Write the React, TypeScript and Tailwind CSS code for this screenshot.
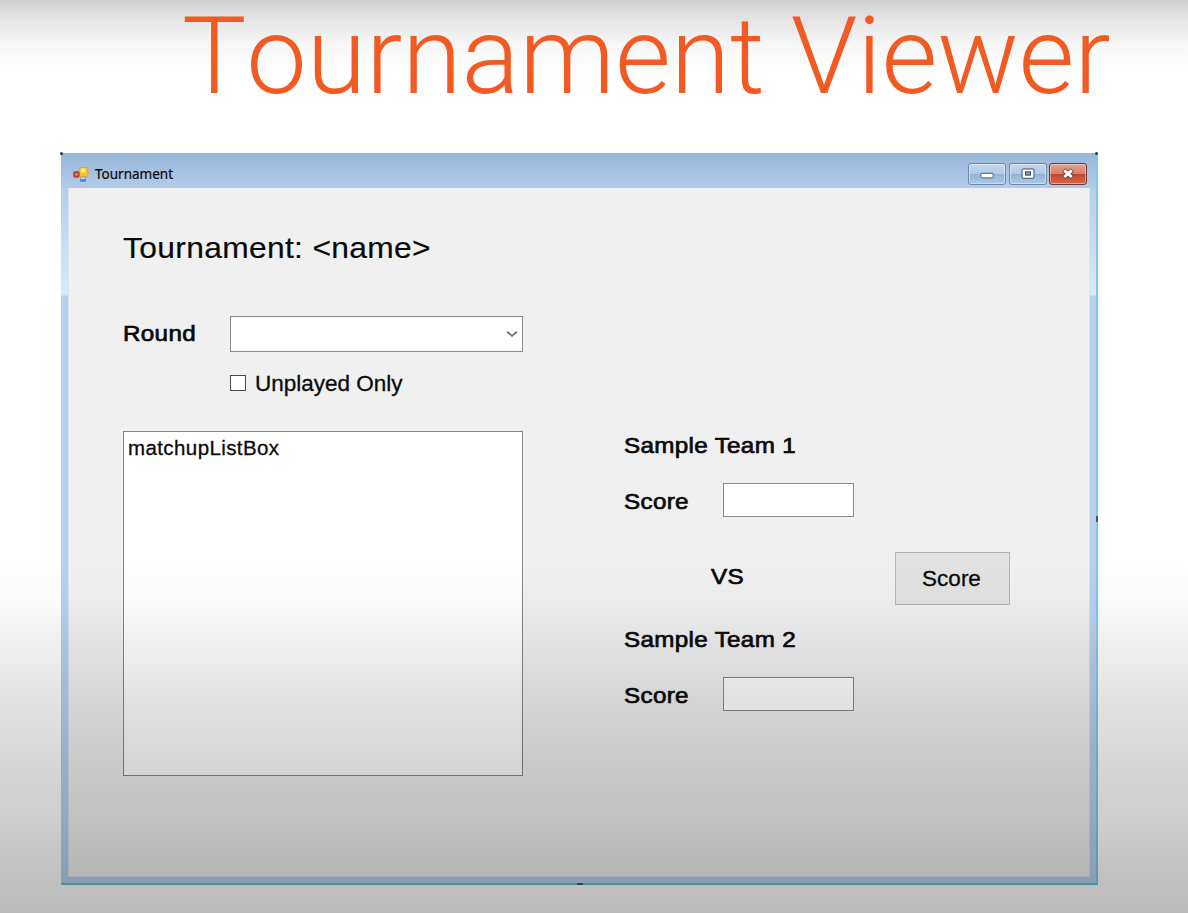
import type { ReactNode } from "react";

function BoldLabel({ children, className = "" }: { children: ReactNode; className?: string }) {
  return (
    <span
      className={`block origin-left scale-x-110 whitespace-nowrap text-[22px] leading-[30px] tracking-[0.3px] [-webkit-text-stroke:0.7px_#0a0a0a] ${className}`}
    >
      {children}
    </span>
  );
}

function FormIcon() {
  return (
    <svg width="17" height="17" viewBox="0 0 17 17">
      <rect x="6.5" y="1.5" width="8.5" height="9" rx="1.5" fill="#f3c233" stroke="#d3a544" />
      <rect x="8" y="2.5" width="4.5" height="4" rx="1" fill="#fde58a" />
      <rect x="0.8" y="5.8" width="5.2" height="5.4" rx="0.8" fill="#d8432f" stroke="#a9453b" />
      <rect x="2.6" y="7.4" width="2" height="2" fill="#f39a86" />
      <rect x="7" y="11.5" width="6" height="4.2" rx="0.6" fill="#4f83dc" />
      <rect x="7.6" y="11.5" width="4.6" height="1.6" fill="#b9d1f6" />
    </svg>
  );
}

function CaptionButton({ kind }: { kind: "min" | "max" | "close" }) {
  const tone =
    kind === "close"
      ? "border-[#6f3840] bg-[linear-gradient(#e6a595_0%,#db7a66_48%,#c8432b_52%,#d9694a_100%)]"
      : "border-[#6f87a8] bg-[linear-gradient(#c3d7ee_0%,#b1cae6_48%,#94b3d8_52%,#abc8e8_100%)]";
  return (
    <div
      className={`flex h-[22px] w-[38px] items-center justify-center rounded-[3px] border shadow-[inset_0_0_0_1px_rgba(255,255,255,0.4)] ${tone}`}
    >
      <svg width="16" height="14" viewBox="0 0 16 14">
        {kind === "min" && (
          <rect x="1.8" y="6.3" width="12.4" height="4.6" rx="1.2" fill="#fff" stroke="#68778c" strokeWidth="1.2" />
        )}
        {kind === "max" && (
          <>
            <rect x="2" y="1.8" width="12" height="9.6" rx="1.8" fill="#fff" stroke="#5c6b80" strokeWidth="1.2" />
            <rect x="5.6" y="4.9" width="4.8" height="3.2" fill="#8ea6c6" stroke="#4a5870" strokeWidth="1.2" />
          </>
        )}
        {kind === "close" && (
          <>
            <path d="M3.6 3l8.8 7.4M12.4 3l-8.8 7.4" stroke="#6d4550" strokeWidth="4.8" />
            <path d="M4.2 3.4l7.6 6.6M11.8 3.4l-7.6 6.6" stroke="#fff" strokeWidth="2.8" />
          </>
        )}
      </svg>
    </div>
  );
}

function ScoreRow() {
  return (
    <div className="flex h-[34px] items-center justify-between">
      <BoldLabel className="mt-[4px]">Score</BoldLabel>
      <div className="h-[34px] w-[131px] border-[1.5px] border-[#8b8b8b] bg-white" />
    </div>
  );
}

export default function App() {
  return (
    <main className="relative h-[913px] w-[1188px] overflow-hidden bg-white font-['Liberation_Sans',Arial,sans-serif] text-[#0a0a0a]">
      <h1 className="relative z-10 h-[153px] whitespace-nowrap pl-[182px] font-['Roboto',sans-serif] text-[108px] font-light leading-[112px] tracking-[-0.12px] text-[#f25a24] [font-kerning:none]">
        Tournament Viewer
      </h1>

      <section className="relative ml-[61px] flex h-[732px] w-[1037px] flex-col border-r-2 border-b-2 border-r-[#7ccaec] border-b-[#5cc0d8] bg-[#b5cee9]">
        <header className="flex h-[35px] shrink-0 items-center bg-[linear-gradient(#98b6d8,#b2cbe8)] pl-[12px] pr-[9px] pt-[7px]">
          <FormIcon />
          <span className="ml-[5px] font-['Noto_Sans',sans-serif] text-[13.5px] leading-[20px] [-webkit-text-stroke:0.2px_#0a0a0a]">
            Tournament
          </span>
          <div className="ml-auto flex gap-[2.5px]">
            <CaptionButton kind="min" />
            <CaptionButton kind="max" />
            <CaptionButton kind="close" />
          </div>
        </header>

        <div className="flex grow bg-[linear-gradient(#b5cee9_0px,#dbe9f8_107px,#b7d0ec_108px,#b7d0ec_100%)] pb-[6px] pl-[7px] pr-[6px]">
          <div className="grow border border-t-0 border-[#d9e5f0] bg-[#f0f0f0] pl-[54px] pt-[40px]">
            <h2 className="origin-left scale-x-[1.06] whitespace-nowrap text-[30px] leading-[40px] tracking-[0.3px] [-webkit-text-stroke:0.2px_#0a0a0a]">
              Tournament: &lt;name&gt;
            </h2>

            <div className="mt-[48px] flex h-[36px] w-[400px] items-center justify-between">
              <BoldLabel>Round</BoldLabel>
              <div className="flex h-[36px] w-[293px] items-center justify-end border-[1.5px] border-[#8b8b8b] bg-white pr-[4px]">
                <svg width="12" height="8" viewBox="0 0 12 8" fill="none">
                  <path d="M1.2 1.6L6 6l4.8-4.4" stroke="#5e5e5e" strokeWidth="1.5" />
                </svg>
              </div>
            </div>

            <div className="mt-[16px] flex h-[30px] items-center pl-[107px]">
              <span className="h-[16px] w-[16px] border-[1.5px] border-[#4a4a4a] bg-white" />
              <span className="ml-[9px] mt-px whitespace-nowrap text-[22.5px] leading-[30px] [-webkit-text-stroke:0.3px_#0a0a0a]">
                Unplayed Only
              </span>
            </div>

            <div className="mt-[33px] flex">
              <div className="h-[345px] w-[400px] border-[1.5px] border-[#85878f] bg-white pl-[4px] pt-[2px]">
                <span className="block text-[20.5px] leading-[28px] tracking-[0.4px] [-webkit-text-stroke:0.3px_#0a0a0a]">
                  matchupListBox
                </span>
              </div>

              <div className="ml-[101px] flex w-[230px] flex-col">
                <BoldLabel>Sample Team 1</BoldLabel>
                <div className="mt-[22px]">
                  <ScoreRow />
                </div>
                <div className="mt-[45px] flex pl-[87px]">
                  <BoldLabel>VS</BoldLabel>
                </div>
                <BoldLabel className="mt-[33px]">Sample Team 2</BoldLabel>
                <div className="mt-[22px]">
                  <ScoreRow />
                </div>
              </div>

              <button className="ml-[41px] mt-[121px] flex h-[53px] w-[115px] items-center justify-center border-[1.5px] border-[#b4b4b4] bg-[#e2e2e2] pr-[2px] pt-px text-[22.5px] [-webkit-text-stroke:0.3px_#0a0a0a]">
                Score
              </button>
            </div>
          </div>
        </div>

        <i className="absolute -left-px -top-px h-[3px] w-[3px] rounded-full bg-[#333a45]" />
        <i className="absolute -right-[2px] -top-px h-[3px] w-[3px] rounded-full bg-[#333a45]" />
        <i className="absolute -right-[2px] top-[363px] h-[6px] w-[2px] bg-[#46566a]" />
        <i className="absolute -bottom-[2px] left-[516px] h-[2px] w-[6px] bg-[#46566a]" />
      </section>

      <div className="pointer-events-none absolute inset-0 bg-[linear-gradient(to_bottom,rgba(0,0,0,0.19)_0px,rgba(0,0,0,0.1)_20px,rgba(0,0,0,0.03)_45px,rgba(0,0,0,0)_75px,rgba(0,0,0,0)_560px,rgba(0,0,0,0.02)_600px,rgba(0,0,0,0.06)_640px,rgba(0,0,0,0.12)_710px,rgba(0,0,0,0.16)_760px,rgba(0,0,0,0.19)_810px,rgba(0,0,0,0.23)_860px,rgba(0,0,0,0.27)_913px)]" />
    </main>
  );
}
